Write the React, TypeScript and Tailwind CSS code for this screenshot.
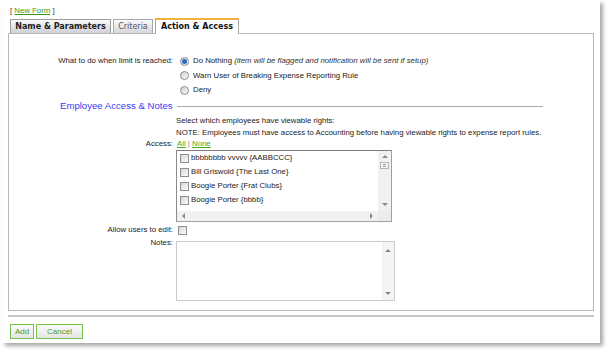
const employees = [
  "bbbbbbbb vvvvv {AABBCCC}",
  "Bill Griswold {The Last One}",
  "Boogie Porter {Frat Clubs}",
  "Boogie Porter {bbbb}",
];

function Radio({ checked }: { checked?: boolean }) {
  return (
    <span className="w-[9px] h-[9px] rounded-full border border-[#8c8c8c] bg-linear-to-br from-[#d2d2d2] to-[#fbfbfb] flex items-center justify-center shrink-0">
      {checked && <span className="w-[5px] h-[5px] rounded-full bg-[#2b6cc8]" />}
    </span>
  );
}

function Checkbox() {
  return <span className="w-[9px] h-[9px] border border-[#8f8f8f] bg-linear-to-br from-[#d6d6d6] to-[#fdfdfd] shrink-0" />;
}

function Arrow({ dir }: { dir: "up" | "down" | "left" | "right" }) {
  const pts = {
    up: "0,4 3,1 6,4",
    down: "0,1 3,4 6,1",
    left: "4,0 1,3 4,6",
    right: "1,0 4,3 1,6",
  }[dir];
  const vertical = dir === "up" || dir === "down";
  return (
    <svg className={vertical ? "w-[6px] h-[5px]" : "w-[5px] h-[6px]"} viewBox={vertical ? "0 0 6 5" : "0 0 5 6"}>
      <polygon points={pts} fill="#8a8a8a" />
    </svg>
  );
}

function Row({ label, children, className = "" }: { label?: string; children?: React.ReactNode; className?: string }) {
  return (
    <div className={"flex " + className}>
      <div className="w-[164px] text-right shrink-0">{label}</div>
      <div className="ml-[3px] flex-1">{children}</div>
    </div>
  );
}

export default function App() {
  return (
    <div className="min-h-screen bg-white font-['Liberation_Sans',Arial,sans-serif] text-[7.8px] text-[#222]">
      <div className="ml-[2px] w-[598px] h-[343px] bg-white shadow-[3px_3px_4px_rgba(0,0,0,0.35)] pt-[5px]">
        <div className="ml-[8px] leading-[12px] text-[#333]">
          [ <a className="text-[#3c9a1c] underline">New Form</a> ]
        </div>

        <div className="ml-[6px] w-[586px] mt-[2px]">
          {/* Tabs */}
          <div className="flex items-end h-[14px] pl-[2px] gap-[2px] font-['DejaVu_Sans',sans-serif]">
            <div className="w-[101px] h-[14px] border border-b-0 border-[#9c9c9c] bg-linear-to-b from-[#fbfbfb] to-[#cfd0d8] flex items-center justify-center font-bold text-[8px] text-[#222]">
              Name &amp; Parameters
            </div>
            <div className="w-[40px] h-[14px] border border-b-0 border-[#a8a8a8] bg-linear-to-b from-[#fbfbfb] to-[#d6d6dc] flex items-center justify-center text-[8px] text-[#555]">
              Criteria
            </div>
            <div className="relative w-[84px] h-[16px] -mb-[1px] border border-b-0 border-[#a8a8a8] border-t-2 border-t-[#f2b13c] bg-white flex items-center justify-center font-bold text-[8px] text-[#111]">
              Action &amp; Access
            </div>
          </div>

          {/* Panel */}
          <div className="border border-[#b8b8b8] h-[278px] pt-[20px]">
            <Row label="What to do when limit is reached:" className="leading-[14.5px]">
              <div className="flex flex-col ml-[4px]">
                <div className="h-[14.5px] flex items-center gap-[4px]">
                  <Radio checked />
                  <span>
                    Do Nothing <i className="text-[#333]">(item will be flagged and notification will be sent if setup)</i>
                  </span>
                </div>
                <div className="h-[14.5px] flex items-center gap-[4px]">
                  <Radio />
                  <span>Warn User of Breaking Expense Reporting Rule</span>
                </div>
                <div className="h-[14.5px] flex items-center gap-[4px]">
                  <Radio />
                  <span>Deny</span>
                </div>
              </div>
            </Row>

            <div className="flex items-center h-[16px] mt-[0.5px] pl-[51px] pr-[50px]">
              <span className="text-[9.6px] leading-[16px] text-[#3b3bf2]">Employee Access &amp; Notes</span>
              <span className="flex-1 h-px bg-[#a8a8a8] ml-[4px]" />
            </div>

            <Row className="leading-[11.5px] mt-[1px]">Select which employees have viewable rights:</Row>
            <Row className="leading-[11.5px]">
              NOTE: Employees must have access to Accounting before having viewable rights to expense report rules.
            </Row>
            <Row label="Access:" className="leading-[11.5px]">
              <span className="ml-[1px]">
                <a className="text-[#46a824] underline">All</a> <span className="text-[#888]">|</span>{" "}
                <a className="text-[#46a824] underline">None</a>
              </span>
            </Row>

            <Row className="mt-[0.5px]">
              <div className="w-[216px] h-[72px] border border-[#a0a0a0] border-t-[#7c7c7c] border-l-[#8a8a8a] flex flex-col bg-white">
                <div className="flex flex-1 min-h-0">
                  <div className="flex-1 flex flex-col">
                    {employees.map((e) => (
                      <div key={e} className="h-[14px] flex items-center pl-[3px] gap-[2px]">
                        <Checkbox />
                        <span>{e}</span>
                      </div>
                    ))}
                  </div>
                  <div className="w-[13px] bg-[#f1f1f1] flex flex-col items-center pt-[3px] pb-[4px]">
                    <Arrow dir="up" />
                    <div className="mt-[3px] w-[9px] h-[7px] border border-[#b4b4b4] bg-[#f8f8f8] flex flex-col justify-center gap-[1px] px-[2px]">
                      <span className="h-px bg-[#9a9a9a]" />
                      <span className="h-px bg-[#9a9a9a]" />
                    </div>
                    <div className="flex-1" />
                    <Arrow dir="down" />
                  </div>
                </div>
                <div className="h-[10px] flex bg-[#f1f1f1]">
                  <div className="flex-1 flex items-center justify-between px-[4px]">
                    <Arrow dir="left" />
                    <Arrow dir="right" />
                  </div>
                  <div className="w-[13px] bg-[#ececec]" />
                </div>
              </div>
            </Row>

            <Row label="Allow users to edit:" className="h-[14px] items-center mt-[1px]">
              <div className="ml-[2px] flex items-center">
                <Checkbox />
              </div>
            </Row>

            <Row label="Notes:" className="leading-[12px]">
              <div className="mt-[4px] w-[219px] h-[60px] border border-[#cacaca] flex bg-white">
                <div className="flex-1" />
                <div className="w-[12px] bg-[#f4f4f4] flex flex-col items-center justify-between pt-[6px] pb-[4px]">
                  <Arrow dir="up" />
                  <Arrow dir="down" />
                </div>
              </div>
            </Row>
          </div>

          <div className="mt-[4px] h-[2px] bg-[#c6c6c6]" />

          <div className="mt-[7px] ml-[2px] flex gap-[2px]">
            <button className="w-[24px] h-[15px] border-[1.5px] border-[#74c44c] bg-linear-to-b from-[#fbfbfb] to-[#e4e4e4] text-[#4a9c2a] text-[8px] leading-[11px]">
              Add
            </button>
            <button className="w-[47px] h-[15px] border-[1.5px] border-[#74c44c] bg-linear-to-b from-[#fbfbfb] to-[#e4e4e4] text-[#4a9c2a] text-[8px] leading-[11px]">
              Cancel
            </button>
          </div>
        </div>
      </div>
    </div>
  );
}
